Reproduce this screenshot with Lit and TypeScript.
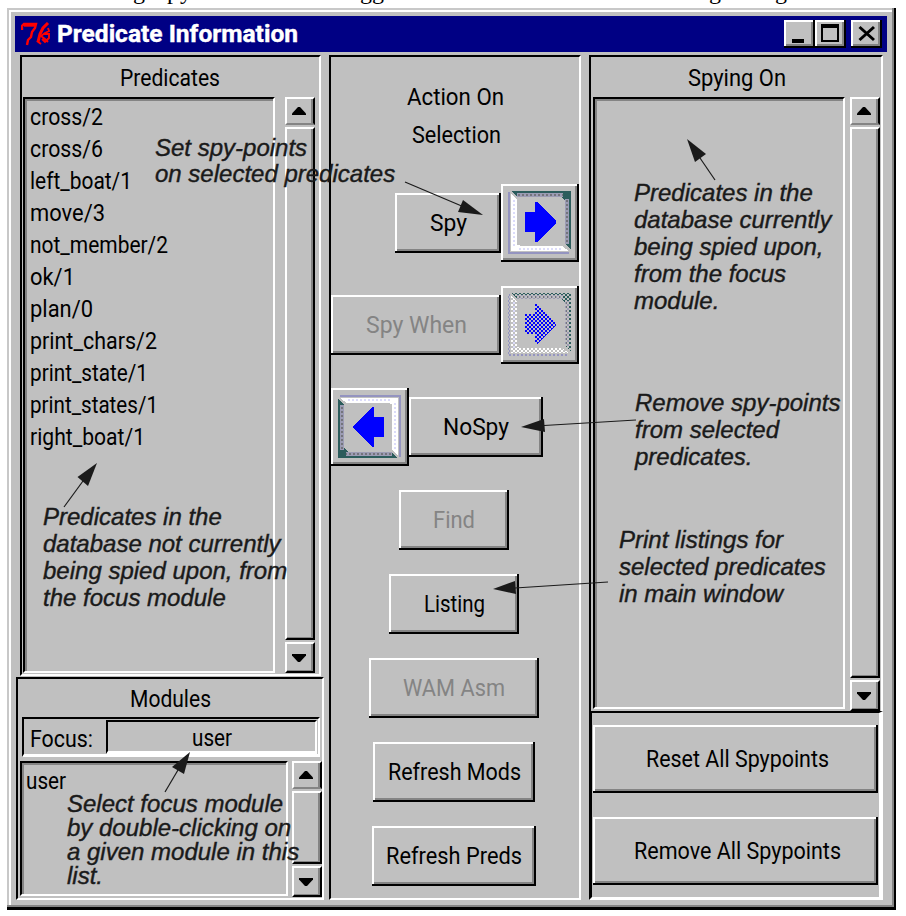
import { LitElement, html, svg, css } from "lit";
import { customElement, property } from "lit/decorators.js";

/** Text run with a fixed advance width, in the style of a narrow system font. */
@customElement("ui-text")
class UiText extends LitElement {
  @property() text = "";
  @property({ type: Number }) w = 100;
  static styles = css`
    :host { display: block; flex: none; line-height: 0; }
    svg { display: block; overflow: visible; }
    text { font-family: Roboto, "Liberation Sans", sans-serif; font-size: 24.6px; fill: currentColor; }
    :host([bold]) text { font-weight: 700; font-size: 23.6px; stroke: currentColor; stroke-width: 0.4; }
  `;
  render() {
    return html`<svg width=${this.w} height="28">
      <text x="0" y="23" textLength=${this.w} lengthAdjust="spacingAndGlyphs">${this.text}</text>
    </svg>`;
  }
}

/** Vertical scrollbar whose thumb fills the trough. */
@customElement("ui-scroll")
class UiScroll extends LitElement {
  static styles = css`
    :host { display: flex; flex-direction: column; flex: none; width: 30px; gap: 2px; }
    div { box-sizing: border-box; border: 2px solid; border-color: #fff #000 #848484 #fff; box-shadow: inset -2px 0 #848484; }
    .cap { height: 28px; flex: none; display: flex; align-items: center; justify-content: center; }
    .thumb { flex: 1; border-bottom-color: #000; box-shadow: inset -2px -1px #848484; }
    .down { height: 31px; border-bottom-color: #000; box-shadow: inset -2px -1px #848484; }
    svg { margin-right: 2px; }
  `;
  render() {
    return html`
      <div class="cap"><svg width="16" height="8"><path d="M1 8V6.500L7 0H9L15 6.500V8Z" /></svg></div>
      <div class="thumb"></div>
      <div class="cap down"><svg width="16" height="8"><path d="M1 0V1.500L7 8H9L15 1.500V0Z" /></svg></div>`;
  }
}

/** Square push button carrying a framed arrow. */
@customElement("arrow-button")
class ArrowButton extends LitElement {
  @property({ type: Boolean, reflect: true }) back = false;
  @property({ type: Boolean, reflect: true }) disabled = false;
  static styles = css`
    :host {
      display: block; flex: none; width: 78px; height: 78px;
      box-shadow: inset -2px -2px #000, inset 2px 2px #fff, inset -4px -4px #848484;
    }
    svg { display: block; }
  `;
  render() {
    const art = svg`
      <rect x="7" y="8" width="2" height="62" fill="#9494c0"/>
      <rect x="8" y="68" width="60" height="2" fill="#9494c0"/>
      <path d="M10 10L16 15V61L21 62H61L68 67H10Z" fill="#fff"/>
      <path d="M13 16V62M18 65H62" stroke="#dcdcfa" stroke-width="2" stroke-dasharray="2 2" fill="none"/>
      <path d="M11 7H70V66L64 60V17L60 13H16Z" fill="#2c5c5c"/>
      <path d="M16 11H62M66 15V60" stroke="#9c9cb4" stroke-width="4" fill="none"/>
      <path d="M17 11H62M66 16V60" stroke="#74747c" stroke-width="2" stroke-dasharray="2 2" fill="none"/>
      <path d="M24 28H34V18H36L55 37V39L36 58H34V48H24Z" fill="#0000ff"/>`;
    return html`<svg width="78" height="78" viewBox="0 0 78 78" shape-rendering="crispEdges">
      <defs>
        <pattern id="d" width="4" height="4" patternUnits="userSpaceOnUse">
          <path d="M0 0H2V2H0ZM2 2H4V4H2Z" fill="#fff"/>
        </pattern>
        <mask id="m" maskUnits="userSpaceOnUse" x="0" y="0" width="78" height="78"><rect width="78" height="78" fill="url(#d)"/></mask>
      </defs>
      <g mask=${this.disabled ? "url(#m)" : "none"}>
        <g transform=${this.back ? "rotate(180 38.5 38.5)" : ""}>${art}</g>
      </g>
    </svg>`;
  }
}

const predicates: [string, number][] = [
  ["cross/2", 73], ["cross/6", 73], ["left_boat/1", 102], ["move/3", 75],
  ["not_member/2", 138], ["ok/1", 45], ["plan/0", 63], ["print_chars/2", 127],
  ["print_state/1", 118], ["print_states/1", 128], ["right_boat/1", 115],
];

interface Note { x: number; y: number; step: number; lines: string[]; from: number[]; head: string; to: number[]; }

const notes: Note[] = [
  { x: 155, y: 156, step: 26, lines: ["Set spy-points", "on selected predicates"],
    from: [405, 182], to: [464, 207], head: "483,215 463,200 458,212" },
  { x: 634, y: 201, step: 27, lines: ["Predicates in the", "database currently", "being spied upon,", "from the focus", "module."],
    from: [715, 180], to: [700, 158], head: "687,139 706,154 695,162" },
  { x: 635, y: 411, step: 27, lines: ["Remove spy-points", "from selected", "predicates."],
    from: [636, 420], to: [544, 425.5], head: "521,427 544,419 545,432" },
  { x: 619, y: 548, step: 27, lines: ["Print listings for", "selected predicates", "in main window"],
    from: [608, 582], to: [515, 588], head: "493,589 515,581 516,594" },
  { x: 43, y: 525, step: 27, lines: ["Predicates in the", "database not currently", "being spied upon, from", "the focus module"],
    from: [64, 507], to: [83, 481], head: "97,463 77.5,477 88,486" },
  { x: 67, y: 812, step: 24, lines: ["Select focus module", "by double-clicking on", "a given module in this", "list."],
    from: [165, 792], to: [178, 770], head: "190,752 172,767 184,774" },
];

@customElement("app-root")
class AppRoot extends LitElement {
  static styles = css`
    :host { display: block; position: relative; width: 906px; height: 916px; background: #fff; color: #000; overflow: hidden; }
    .window {
      box-sizing: border-box; width: 889px; height: 902px; margin: 8px 0 0 7px; padding: 8px 8px 9px; background: #c0c0c0;
      box-shadow: inset -2px -3px #000, inset -4px -5px #848484, inset 2px 2px #c8c8c8, inset 4px 4px #fff;
      float: left;
    }
    .title { display: flex; align-items: center; box-sizing: border-box; height: 36px; width: 872px; background: #000084; color: #fff; padding: 0 5px 0 6px; }
    .title ui-text { margin: -3px auto 0 6px; }
    .wb { width: 31px; height: 28px; margin-top: -1px; background: #c0c0c0; box-shadow: inset -2px -2px #000, inset 2px 2px #fff, inset -4px -4px #848484; }
    .wb + .close { margin-left: 5px; }
    .wb svg { display: block; }
    .body { display: flex; height: 845px; margin-top: 3px; }
    .sunk { box-sizing: border-box; border: 2px solid; border-color: #000 #fff #fff #000; }
    .left { width: 309px; margin-right: 5px; display: flex; flex-direction: column; }
    .preds { margin: 0 3px 1px 5px; height: 621px; display: flex; flex-direction: column; }
    .head { display: flex; justify-content: center; align-items: center; height: 40px; flex: none; }
    .preds .head { padding-right: 1px; }
    .cols { display: flex; justify-content: space-between; flex: 1; min-height: 0; }
    .list { box-shadow: inset 2px 2px #848484; }
    .preds .cols { padding: 0 4px 1px 1px; }
    .preds .list { width: 252px; height: 576px; padding: 3px 5px; }
    .preds .list ui-text { height: 32px; }
    .mods { height: 223px; margin-left: 1px; padding: 0 0 1px 1px; display: flex; flex-direction: column; }
    .focus { height: 40px; width: 298px; margin: 0 0 4px 3px; display: flex; align-items: center; padding: 0 1px 0 6px; justify-content: space-between; border-bottom-width: 3px; }
    .focus ui-text { margin-top: 2px; }
    .entry { width: 211px; height: 34px; display: flex; justify-content: center; align-items: center; border-bottom-width: 3px; }
    .mods .head { height: 38px; }
    .mods .list { width: 268px; height: 135px; padding: 3px 4px; margin-left: 1px; }
    .mid { width: 252px; height: 845px; margin-right: 8px; padding-right: 2px; display: flex; flex-direction: column; align-items: center; gap: 24px; }
    .caption { height: 103px; box-sizing: border-box; padding: 25px 0 0 2px; display: flex; flex-direction: column; align-items: center; gap: 10px; }
    .caption ui-text + ui-text { margin-left: 2px; }
    .pair { width: 248px; display: flex; align-items: center; align-self: flex-start; }
    .pair.end { justify-content: flex-end; }
    .btn {
      display: flex; align-items: center; justify-content: center; height: 60px; flex: none; box-sizing: border-box; padding: 0 0 3px 0;
      box-shadow: inset -2px -2px #000, inset 2px 2px #fff, inset -4px -4px #848484;
    }
    .off { color: #848484; }
    .w106 { width: 106px; } .w110 { width: 110px; } .w130 { width: 130px; } .w134 { width: 134px; }
    .w162 { width: 162px; } .w164 { width: 164px; } .w170 { width: 170px; }
    .right { width: 294px; display: flex; flex-direction: column; }
    .spying { height: 656px; border-bottom: 0; display: flex; flex-direction: column; }
    .spying .head { padding-left: 2px; }
    .spying .cols { padding: 0 1px 0 2px; }
    .spying .list { width: 252px; height: 612px; }
    .all { height: 189px; padding: 12px 0 0 1px; border-width: 2px 4px 3px 3px; display: flex; flex-direction: column; gap: 24px; }
    .all .btn { height: 68px; width: 285px; padding-left: 3px; }
    .overlay { position: absolute; left: 0; top: 0; pointer-events: none; }
    .overlay text { font: italic 24px "Liberation Sans", sans-serif; fill: #1a1a1a; stroke: #1a1a1a; stroke-width: 0.4; }
    .overlay .prose { font: 24px "Liberation Serif", serif; fill: #000; stroke: none; }
    .overlay line { stroke: #1a1a1a; stroke-width: 1.2; }
    .overlay polygon { fill: #1a1a1a; }
  `;

  private btn(text: string, w: number, cls: string) {
    return html`<div class="btn ${cls}"><ui-text .text=${text} .w=${w}></ui-text></div>`;
  }

  render() {
    return html`
      <div class="window">
        <div class="title">
          <svg width="30" height="24" viewBox="0 0 30 24" fill="none" stroke="#f00" stroke-width="2.4">
            <path d="M1 8V4L3 2H15L14 6L11 10L10 15L7 18L6 23" />
            <path d="M3 3H14" stroke-width="3.4" />
            <path d="M27 1L22 6L19 12L17 20" stroke-width="3" />
            <path d="M27 6L28 9L24 11L20 14L24 17L27 20M24 12H28V16L24 20L21 17M16 19L20 22" stroke-width="1.9" />
          </svg>
          <ui-text bold .text=${"Predicate Information"} .w=${241}></ui-text>
          <div class="wb"><svg width="31" height="28"><rect x="8" y="19" width="12" height="4" /></svg></div>
          <div class="wb"><svg width="31" height="28" fill="none" stroke="#000"><path d="M6 6H24" stroke-width="4" /><path d="M7 6V21H23V6" stroke-width="2" /></svg></div>
          <div class="wb close"><svg width="31" height="28" fill="none" stroke="#000" stroke-width="3"><path d="M8.500 7L23 20M23 7L8.500 20" /></svg></div>
        </div>
        <div class="body">
          <div class="left">
            <div class="preds sunk">
              <div class="head"><ui-text .text=${"Predicates"} .w=${100}></ui-text></div>
              <div class="cols">
                <div class="list sunk">${predicates.map(([t, w]) => html`<ui-text .text=${t} .w=${w}></ui-text>`)}</div>
                <ui-scroll></ui-scroll>
              </div>
            </div>
            <div class="mods sunk">
              <div class="head"><ui-text .text=${"Modules"} .w=${81}></ui-text></div>
              <div class="focus sunk">
                <ui-text .text=${"Focus:"} .w=${63}></ui-text>
                <div class="entry sunk"><ui-text .text=${"user"} .w=${40}></ui-text></div>
              </div>
              <div class="cols">
                <div class="list sunk"><ui-text .text=${"user"} .w=${40}></ui-text></div>
                <ui-scroll></ui-scroll>
              </div>
            </div>
          </div>
          <div class="mid sunk">
            <div class="caption">
              <ui-text .text=${"Action On"} .w=${97}></ui-text>
              <ui-text .text=${"Selection"} .w=${89}></ui-text>
            </div>
            <div class="pair end">${this.btn("Spy", 37, "w106")}<arrow-button></arrow-button></div>
            <div class="pair end">${this.btn("Spy When", 101, "w170 off")}<arrow-button disabled></arrow-button></div>
            <div class="pair"><arrow-button back></arrow-button>${this.btn("NoSpy", 66, "w134")}</div>
            ${this.btn("Find", 42, "w110 off")}
            ${this.btn("Listing", 61, "w130")}
            ${this.btn("WAM Asm", 102, "w170 off")}
            ${this.btn("Refresh Mods", 133, "w162")}
            ${this.btn("Refresh Preds", 136, "w164")}
          </div>
          <div class="right">
            <div class="spying sunk">
              <div class="head"><ui-text .text=${"Spying On"} .w=${98}></ui-text></div>
              <div class="cols"><div class="list sunk"></div><ui-scroll></ui-scroll></div>
            </div>
            <div class="all sunk">
              ${this.btn("Reset All Spypoints", 183, "")}
              ${this.btn("Remove All Spypoints", 207, "")}
            </div>
          </div>
        </div>
      </div>
      <svg class="overlay" width="906" height="916">
        <text class="prose" x="133" y="-1">g</text>
        <text class="prose" x="167" y="-1">p</text>
        <text class="prose" x="180" y="-1">y</text>
        <text class="prose" x="360" y="-1">gg</text>
        <text class="prose" x="709" y="-1">g</text>
        <text class="prose" x="775" y="-1">g</text>
        ${notes.map((n) => svg`
          ${n.lines.map((l, i) => svg`<text x=${n.x} y=${n.y + i * n.step}>${l}</text>`)}
          <line x1=${n.from[0]} y1=${n.from[1]} x2=${n.to[0]} y2=${n.to[1]} />
          <polygon points=${n.head} />`)}
      </svg>`;
  }
}
